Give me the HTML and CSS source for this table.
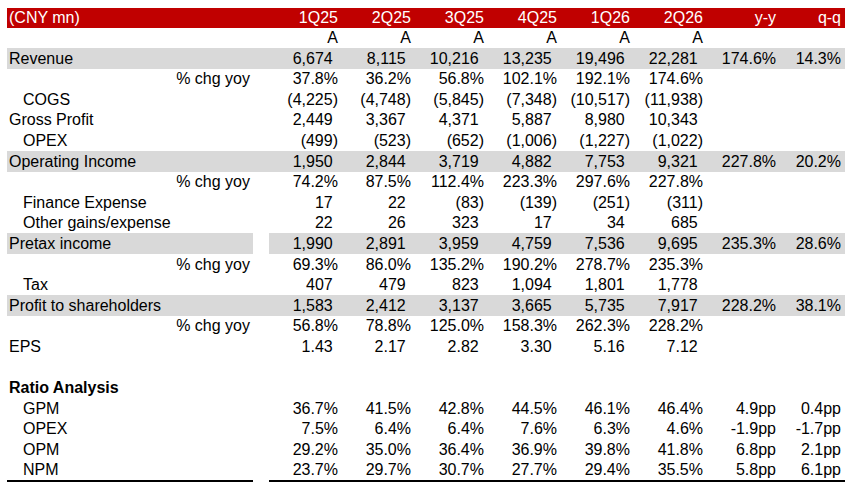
FILE: index.html
```html
<!DOCTYPE html>
<html lang="en">
<head>
<meta charset="utf-8">
<title>Quarterly Financials</title>
<link rel="stylesheet" href="styles.css">
</head>
<body>
<table class="fin">
  <colgroup>
    <col class="c-lbl"><col class="c-gap">
    <col class="c-q"><col class="c-q"><col class="c-q"><col class="c-q"><col class="c-q"><col class="c-q">
    <col class="c-q"><col class="c-last">
  </colgroup>
  <thead>
    <tr class="hdr">
      <th class="lbl">(CNY mn)</th><th class="gap"></th>
      <th>1Q25</th><th>2Q25</th><th>3Q25</th><th>4Q25</th><th>1Q26</th><th>2Q26</th><th>y-y</th><th>q-q</th>
    </tr>
    <tr class="act">
      <th class="lbl"></th><th class="gap"></th>
      <th>A</th><th>A</th><th>A</th><th>A</th><th>A</th><th>A</th><th></th><th></th>
    </tr>
  </thead>
  <tbody>
    <tr class="hl">
      <td class="lbl">Revenue</td><td class="gap"></td>
      <td class="i">6,674</td><td class="i">8,115</td><td class="i">10,216</td><td class="i">13,235</td><td class="i">19,496</td><td class="i">22,281</td><td>174.6%</td><td>14.3%</td>
    </tr>
    <tr>
      <td class="sub">% chg yoy</td><td class="gap"></td>
      <td>37.8%</td><td>36.2%</td><td>56.8%</td><td>102.1%</td><td>192.1%</td><td>174.6%</td><td></td><td></td>
    </tr>
    <tr>
      <td class="lbl ind">COGS</td><td class="gap"></td>
      <td>(4,225)</td><td>(4,748)</td><td>(5,845)</td><td>(7,348)</td><td>(10,517)</td><td>(11,938)</td><td></td><td></td>
    </tr>
    <tr>
      <td class="lbl">Gross Profit</td><td class="gap"></td>
      <td class="i">2,449</td><td class="i">3,367</td><td class="i">4,371</td><td class="i">5,887</td><td class="i">8,980</td><td class="i">10,343</td><td></td><td></td>
    </tr>
    <tr>
      <td class="lbl ind">OPEX</td><td class="gap"></td>
      <td>(499)</td><td>(523)</td><td>(652)</td><td>(1,006)</td><td>(1,227)</td><td>(1,022)</td><td></td><td></td>
    </tr>
    <tr class="hl">
      <td class="lbl">Operating Income</td><td class="gap"></td>
      <td class="i">1,950</td><td class="i">2,844</td><td class="i">3,719</td><td class="i">4,882</td><td class="i">7,753</td><td class="i">9,321</td><td>227.8%</td><td>20.2%</td>
    </tr>
    <tr>
      <td class="sub">% chg yoy</td><td class="gap"></td>
      <td>74.2%</td><td>87.5%</td><td>112.4%</td><td>223.3%</td><td>297.6%</td><td>227.8%</td><td></td><td></td>
    </tr>
    <tr>
      <td class="lbl ind">Finance Expense</td><td class="gap"></td>
      <td class="i">17</td><td class="i">22</td><td>(83)</td><td>(139)</td><td>(251)</td><td>(311)</td><td></td><td></td>
    </tr>
    <tr>
      <td class="lbl ind">Other gains/expense</td><td class="gap"></td>
      <td class="i">22</td><td class="i">26</td><td class="i">323</td><td class="i">17</td><td class="i">34</td><td class="i">685</td><td></td><td></td>
    </tr>
    <tr class="hl split">
      <td class="lbl">Pretax income</td><td class="gap"></td>
      <td class="i">1,990</td><td class="i">2,891</td><td class="i">3,959</td><td class="i">4,759</td><td class="i">7,536</td><td class="i">9,695</td><td>235.3%</td><td>28.6%</td>
    </tr>
    <tr>
      <td class="sub">% chg yoy</td><td class="gap"></td>
      <td>69.3%</td><td>86.0%</td><td>135.2%</td><td>190.2%</td><td>278.7%</td><td>235.3%</td><td></td><td></td>
    </tr>
    <tr>
      <td class="lbl ind">Tax</td><td class="gap"></td>
      <td class="i">407</td><td class="i">479</td><td class="i">823</td><td class="i">1,094</td><td class="i">1,801</td><td class="i">1,778</td><td></td><td></td>
    </tr>
    <tr class="hl">
      <td class="lbl">Profit to shareholders</td><td class="gap"></td>
      <td class="i">1,583</td><td class="i">2,412</td><td class="i">3,137</td><td class="i">3,665</td><td class="i">5,735</td><td class="i">7,917</td><td>228.2%</td><td>38.1%</td>
    </tr>
    <tr>
      <td class="sub">% chg yoy</td><td class="gap"></td>
      <td>56.8%</td><td>78.8%</td><td>125.0%</td><td>158.3%</td><td>262.3%</td><td>228.2%</td><td></td><td></td>
    </tr>
    <tr>
      <td class="lbl">EPS</td><td class="gap"></td>
      <td class="i">1.43</td><td class="i">2.17</td><td class="i">2.82</td><td class="i">3.30</td><td class="i">5.16</td><td class="i">7.12</td><td></td><td></td>
    </tr>
    <tr>
      <td class="lbl"></td><td class="gap"></td>
      <td></td><td></td><td></td><td></td><td></td><td></td><td></td><td></td>
    </tr>
    <tr>
      <td class="lbl sec">Ratio Analysis</td><td class="gap"></td>
      <td></td><td></td><td></td><td></td><td></td><td></td><td></td><td></td>
    </tr>
    <tr>
      <td class="lbl ind">GPM</td><td class="gap"></td>
      <td>36.7%</td><td>41.5%</td><td>42.8%</td><td>44.5%</td><td>46.1%</td><td>46.4%</td><td>4.9pp</td><td>0.4pp</td>
    </tr>
    <tr>
      <td class="lbl ind">OPEX</td><td class="gap"></td>
      <td>7.5%</td><td>6.4%</td><td>6.4%</td><td>7.6%</td><td>6.3%</td><td>4.6%</td><td>-1.9pp</td><td>-1.7pp</td>
    </tr>
    <tr>
      <td class="lbl ind">OPM</td><td class="gap"></td>
      <td>29.2%</td><td>35.0%</td><td>36.4%</td><td>36.9%</td><td>39.8%</td><td>41.8%</td><td>6.8pp</td><td>2.1pp</td>
    </tr>
    <tr class="end">
      <td class="lbl ind">NPM</td><td class="gap"></td>
      <td>23.7%</td><td>29.7%</td><td>30.7%</td><td>27.7%</td><td>29.4%</td><td>35.5%</td><td>5.8pp</td><td>6.1pp</td>
    </tr>
  </tbody>
</table>
</body>
</html>
```

FILE: styles.css
```css
body {
  margin: 0;
  background: #ffffff;
  color: #000000;
  font-family: "Liberation Sans", Arial, Helvetica, sans-serif;
  font-size: 16px;
}

.fin {
  margin: 8px 0 0 7px;
  width: 838px;
  table-layout: fixed;
  border-collapse: separate;
  border-spacing: 0;
}

.c-lbl { width: 246px; }
.c-gap { width: 16px; }
.c-q { width: 73px; }
.c-last { width: 65px; }

.fin th,
.fin td {
  padding: 0 4px 1px 0;
  text-align: right;
  vertical-align: bottom;
  white-space: nowrap;
  font-weight: normal;
  line-height: normal;
}

.fin thead tr { height: 20px; }
.fin tbody tr { height: 20.6px; }

.hdr th {
  background: #c00000;
  color: #ffffff;
}

.fin .lbl {
  text-align: left;
  padding-left: 2px;
}

.fin .ind { padding-left: 16px; }

.fin .sub {
  text-align: right;
  padding-right: 3px;
}

.fin .i { padding-right: 9.3px; }

.fin .sec { font-weight: bold; }

.hl td { background: #d9d9d9; }
.split td.gap { background: transparent; }

.fin tbody tr.end { height: 22.6px; }
.end td { border-bottom: 2px solid #000000; }
.end td.gap { border-bottom: none; }
```
